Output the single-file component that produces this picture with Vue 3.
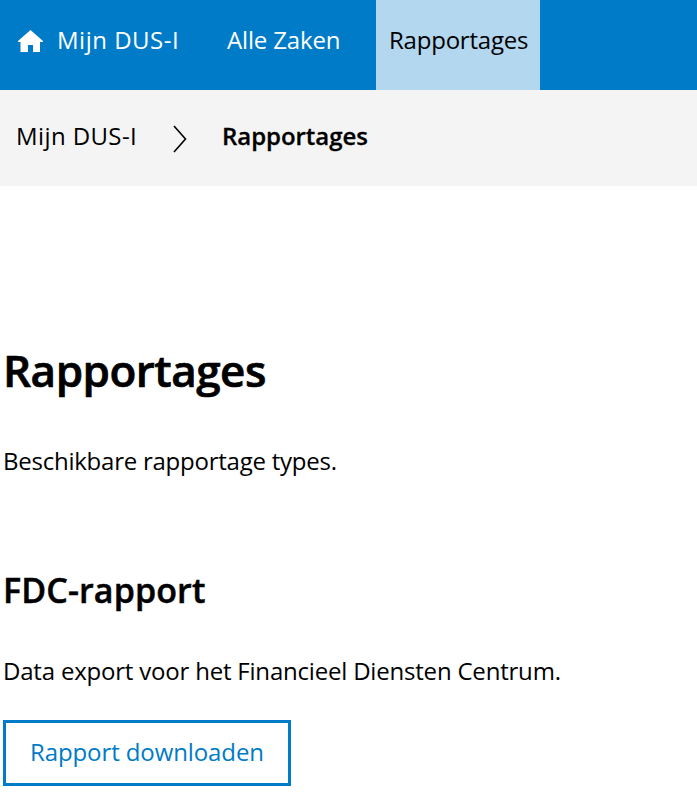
<script setup>
const intro = 'Beschikbare rapportage types.'
</script>

<template>
  <div class="page">
    <nav class="nav">
      <a class="item home">
        <svg class="house" viewBox="0 0 25 22"><path d="M12.5 0 25 11V12H22V22H15V15H10V22H2.5V12H0V11Z" /></svg>
        <span class="t t-home">Mijn DUS-I</span>
      </a>
      <a class="item zaken"><span class="t t-zaken">Alle Zaken</span></a>
      <a class="item active"><span class="t t-rap">Rapportages</span></a>
    </nav>
    <div class="crumbs">
      <span class="t t-crumb">Mijn DUS-I</span>
      <svg class="chev" viewBox="0 0 14 28"><path d="M1 1 12.5 14 1 27" /></svg>
      <b class="t t-cur">Rapportages</b>
    </div>
    <main>
      <h1 class="t">Rapportages</h1>
      <p class="t intro">{{ intro }}</p>
      <h2 class="t">FDC-rapport</h2>
      <p class="t desc">Data export voor het Financieel Diensten Centrum.</p>
      <button><span class="t label">Rapport downloaden</span></button>
    </main>
  </div>
</template>

<style>
body { background: #fff; }
</style>
<style scoped>
.page { font-family: "Open Sans", "Noto Sans", sans-serif; font-size: 24px; color: #000; height: 798px; overflow: hidden; }
.t { white-space: nowrap; line-height: 36px; }
.nav { display: flex; height: 90px; background: #007bc7; color: #fff; }
.item { display: flex; box-sizing: border-box; padding-top: 22px; align-items: flex-start; }
.home { width: 213px; padding-left: 18px; }
.house { width: 25px; height: 22px; margin: 8px 14px 0 0; fill: #fff; flex: none; }
.zaken { width: 163px; padding-left: 14px; }
.active { width: 164px; padding-left: 13px; background: #b2d7ee; color: #000; }
.t-home { letter-spacing: 0.5px; }
.t-crumb { letter-spacing: 0.4px; }
.t-zaken { letter-spacing: -0.15px; }
.t-rap { letter-spacing: -0.22px; }
.crumbs { display: flex; align-items: flex-start; box-sizing: border-box; height: 96px; padding: 28px 16px 0; background: #f4f4f4; }
.chev { width: 14px; height: 28px; margin: 7px 0 0 37px; fill: none; stroke: #000; stroke-width: 1.6; }
.t-crumb { width: 120px; }
.t-cur { margin-left: 35px; font-weight: 600; letter-spacing: -0.05px; -webkit-text-stroke: 0.3px #000; }
main { padding: 166px 4px 0 3px; }
h1 { margin: 0; font-size: 44px; font-weight: 600; letter-spacing: -0.5px; -webkit-text-stroke: 0.7px #000; }
.intro { margin: 55px 0 0; letter-spacing: -0.24px; }
h2 { margin: 93px 0 0; font-size: 34px; font-weight: 600; letter-spacing: 0.12px; -webkit-text-stroke: 0.5px #000; }
.desc { margin: 45px 0 0; letter-spacing: -0.2px; }
button { display: block; box-sizing: border-box; width: 288px; height: 66px; margin-top: 31px; padding: 0 0 2px 24px; border: 3px solid #007bc7; background: #fff; color: #007bc7; font: inherit; text-align: left; }
.label { letter-spacing: -0.1px; }
</style>
